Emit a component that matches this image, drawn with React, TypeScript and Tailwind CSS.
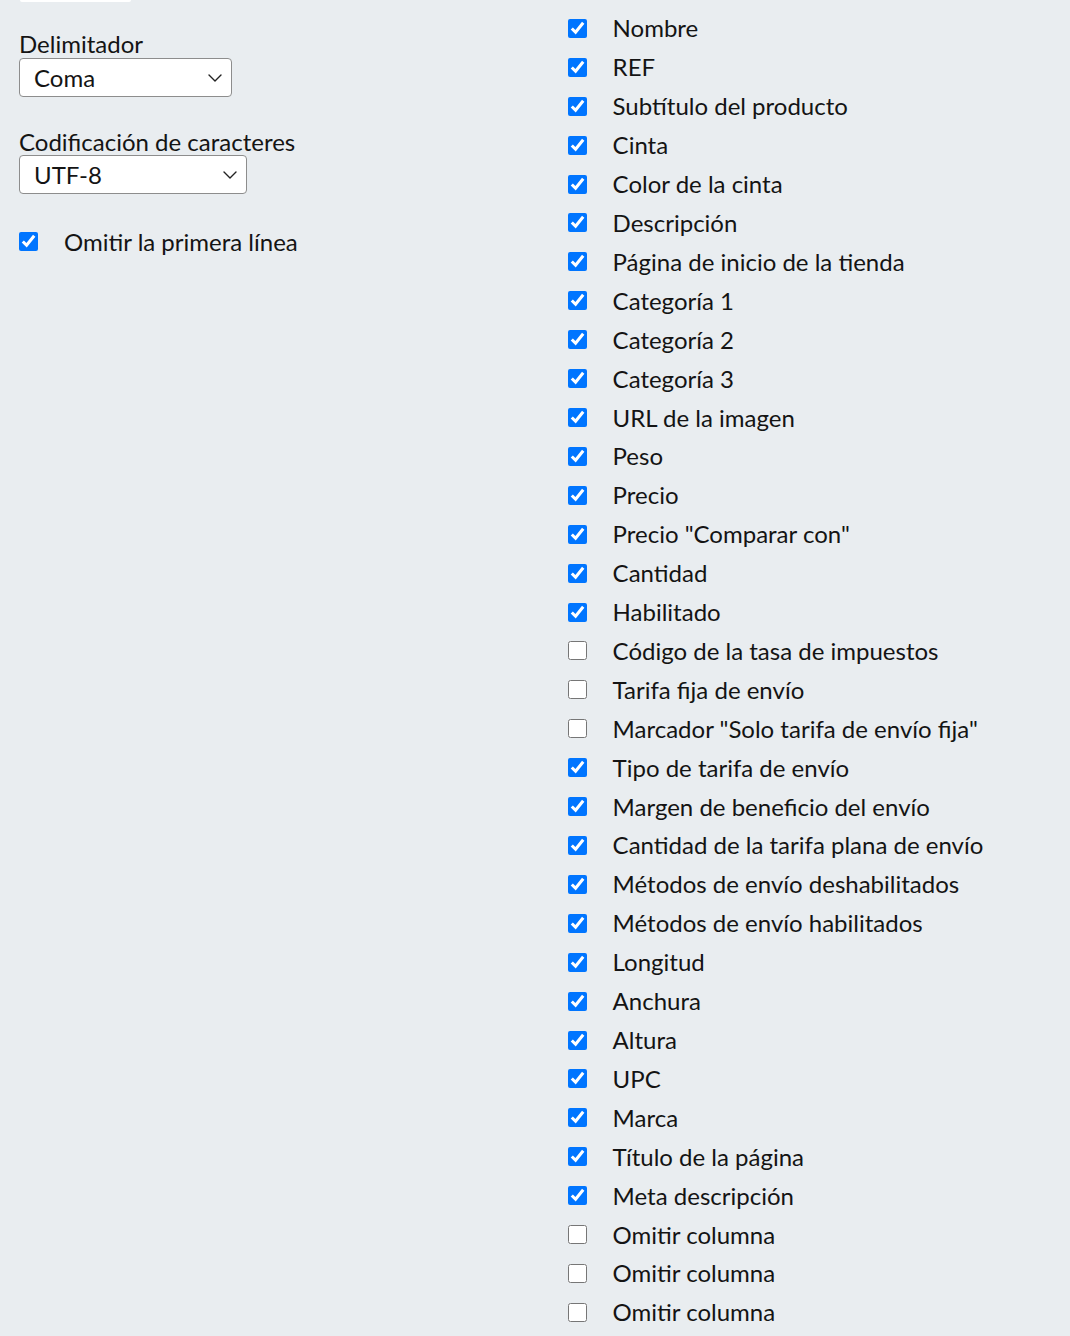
import { ChevronDown } from 'lucide-react';

const FIELDS: [string, boolean][] = [
  ['Nombre', true],
  ['REF', true],
  ['Subtítulo del producto', true],
  ['Cinta', true],
  ['Color de la cinta', true],
  ['Descripción', true],
  ['Página de inicio de la tienda', true],
  ['Categoría 1', true],
  ['Categoría 2', true],
  ['Categoría 3', true],
  ['URL de la imagen', true],
  ['Peso', true],
  ['Precio', true],
  ['Precio "Comparar con"', true],
  ['Cantidad', true],
  ['Habilitado', true],
  ['Código de la tasa de impuestos', false],
  ['Tarifa fija de envío', false],
  ['Marcador "Solo tarifa de envío fija"', false],
  ['Tipo de tarifa de envío', true],
  ['Margen de beneficio del envío', true],
  ['Cantidad de la tarifa plana de envío', true],
  ['Métodos de envío deshabilitados', true],
  ['Métodos de envío habilitados', true],
  ['Longitud', true],
  ['Anchura', true],
  ['Altura', true],
  ['UPC', true],
  ['Marca', true],
  ['Título de la página', true],
  ['Meta descripción', true],
  ['Omitir columna', false],
  ['Omitir columna', false],
  ['Omitir columna', false],
];

function FakeSelect({ value, width }: { value: string; width: string }) {
  return (
    <div
      className={`flex h-[39px] items-center justify-between rounded-[4px] border border-[#8d8d8d] bg-white pl-[14px] pr-[4px] ${width}`}
    >
      <span>{value}</span>
      <ChevronDown className="h-[24px] w-[24px] text-[#222]" strokeWidth={1.4} />
    </div>
  );
}

export default function App() {
  return (
    <div
      className="min-h-[1336px] w-full bg-[#e9edf0] text-[24px] text-[#141414]"
      style={{ fontFamily: 'Lato, "Noto Sans", sans-serif' }}
    >
      <div className="flex">
        <div className="w-[568px] shrink-0 pl-[19px]">
          <div className="ml-px h-[2px] w-[111px] rounded-b-[2px] bg-white" />
          <div className="mt-[28px] leading-[28px]">Delimitador</div>
          <FakeSelect value="Coma" width="w-[213px]" />
          <div className="mt-[31px] leading-[27px]">Codificación de caracteres</div>
          <FakeSelect value="UTF-8" width="w-[228px]" />
          <label className="mt-[38px] flex items-center gap-[26px] leading-[19px]">
            <input type="checkbox" defaultChecked className="m-0 h-[19px] w-[19px]" />
            <span>Omitir la primera línea</span>
          </label>
        </div>
        <div className="flex flex-col pt-[9px]">
          {FIELDS.map(([name, checked], i) => (
            <label key={i} className="flex h-[38.92px] items-center gap-[25.6px]">
              <input type="checkbox" defaultChecked={checked} className="m-0 h-[19px] w-[19px]" />
              <span className="whitespace-nowrap">{name}</span>
            </label>
          ))}
        </div>
      </div>
    </div>
  );
}
